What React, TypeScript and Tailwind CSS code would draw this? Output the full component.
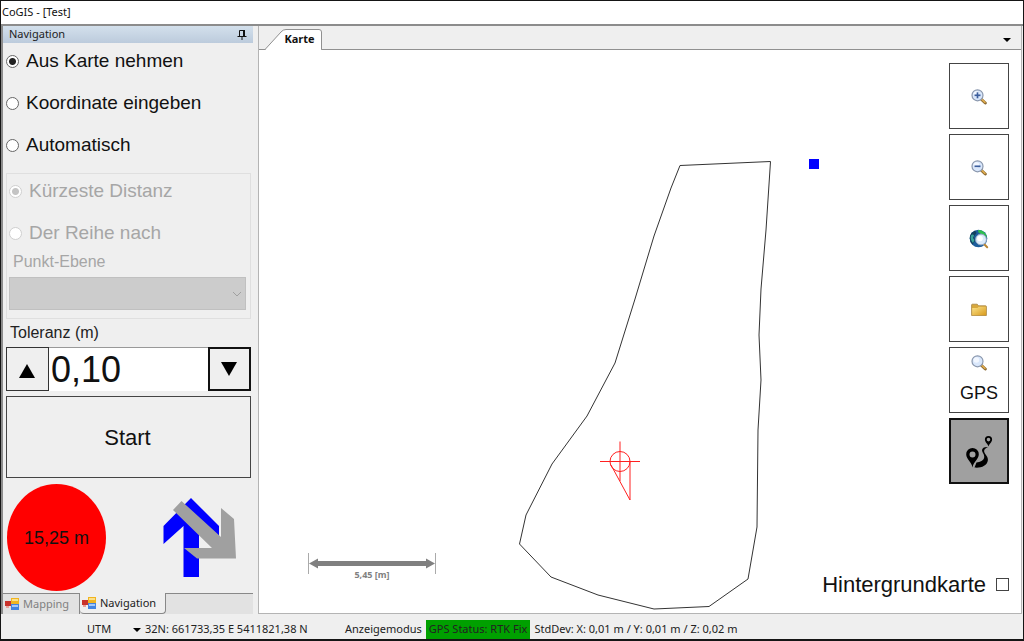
import { useState } from 'react';
import type { ReactNode } from 'react';

const modes = ['Aus Karte nehmen', 'Koordinate eingeben', 'Automatisch'];
const orders = ['Kürzeste Distanz', 'Der Reihe nach'];

const radioClass =
  'appearance-none shrink-0 w-[13px] h-[13px] rounded-full border border-[#666] bg-white checked:bg-[radial-gradient(#222_0_3px,#fff_4px)] disabled:border-[#cfcfcf] disabled:checked:bg-[radial-gradient(#c4c4c4_0_3px,#fff_4px)]';

function Lens({ sign }: { sign?: 'plus' | 'minus' }) {
  return (
    <svg className="w-4 h-4" viewBox="0 0 16 16" fill="none">
      <path d="M10 10 L14.3 14" stroke="#8a6a35" strokeWidth="3" strokeLinecap="round" />
      <path d="M10.4 10 L14 13.3" stroke="#e0ac4c" strokeWidth="1.6" strokeLinecap="round" />
      <circle cx="6.5" cy="6.3" r="5.5" fill="#d9e7fb" stroke="#8a97ad" strokeWidth="1.2" />
      <circle cx="5.4" cy="5" r="2.8" fill="#f2f7ff" />
      {sign && <path d="M3.5 6.3h6" stroke="#3c5f9e" strokeWidth="1.7" />}
      {sign === 'plus' && <path d="M6.5 3.3v6" stroke="#3c5f9e" strokeWidth="1.7" />}
    </svg>
  );
}

function GlobeLens() {
  return (
    <svg className="w-5 h-5" viewBox="0 0 20 20" fill="none">
      <circle cx="9.5" cy="9.5" r="8.8" fill="#1c5d9c" />
      <path d="M1 7 A9 9 0 0 1 6 1.5 L7.5 4 L5 7.5 L6 12 L3.5 15.5 A9 9 0 0 1 1 7Z" fill="#12415f" />
      <path d="M2 6.5 C3 5 4.5 5 5 6.5 L4 9 L5.5 11 L4 14 C2 12 1 9 2 6.5Z" fill="#39a59a" />
      <path d="M9 1 C13 .6 17.5 4 18 8.5 L15 6 L12 5 L9.5 3.5Z" fill="#2fc04c" />
      <path d="M14 14 L18.2 18.2" stroke="#b98534" strokeWidth="2" strokeLinecap="round" />
      <circle cx="12" cy="10.5" r="5.4" fill="#dcebfb" stroke="#93a7c0" />
      <circle cx="11" cy="9.5" r="2.8" fill="#fff" />
    </svg>
  );
}

function Folder() {
  return (
    <svg className="w-4 h-4" viewBox="0 0 16 16">
      <defs>
        <linearGradient id="folder" x1="0" y1="0" x2="1" y2="1">
          <stop offset="0" stopColor="#fbe48c" />
          <stop offset="1" stopColor="#d99a1c" />
        </linearGradient>
      </defs>
      <path d="M.6 13.5V3q0-.8.8-.8h4.8l1.4 1.6h7q.8 0 .8.8v8.9z" fill="#d8a83c" stroke="#a78441" strokeWidth=".8" />
      <path d="M1.2 13.2V6h5.3l1.3-1.3h7.1v8.5z" fill="url(#folder)" />
    </svg>
  );
}

function Route() {
  return (
    <svg className="w-7 h-8" viewBox="0 0 28 32">
      <path
        d="M7.5 12a6.3 6.3 0 0 0-6.3 6.3c0 5 5.2 7.2 6.3 13.2 1.1-6 6.3-8.2 6.3-13.2A6.3 6.3 0 0 0 7.5 12zm0 3.4a3 3 0 1 1 0 6 3 3 0 0 1 0-6z"
        fillRule="evenodd"
      />
      <path
        d="M23.5 0a3.6 3.6 0 0 0-3.6 3.6c0 2.8 2.8 4 3.6 7 .8-3 3.6-4.2 3.6-7A3.6 3.6 0 0 0 23.500 0zm0 1.800a1.800 1.800 0 1 1 0 3.600 1.800 1.800 0 0 1 0-3.600z"
        fillRule="evenodd"
      />
      <path d="M23 11c-3-.4-6 .7-6 3.300 0 2.400 2.600 4 2.200 7-.4 3.300-4.200 4.800-7.700 5.200l-2 5c5.500.8 13-1.400 13.400-7.500.2-4-3.800-6.300-3.800-9 0-1.900 1.900-3 3.900-4z" />
    </svg>
  );
}

function FormIcon() {
  return (
    <svg className="w-[14px] h-[14px] shrink-0" viewBox="0 0 14 14">
      <rect x="0" y="4" width="6" height="5" fill="#c8322b" />
      <rect x="1" y="9" width="3" height="2" fill="#e8a09a" />
      <rect x="6" y="1" width="8" height="6" fill="#f0b420" />
      <rect x="7" y="2" width="6" height="2" fill="#fbe08a" />
      <rect x="6" y="7" width="8" height="6" fill="#4384e0" />
      <rect x="7" y="8" width="6" height="2" fill="#a4c8f8" />
    </svg>
  );
}

function Arrows() {
  return (
    <svg className="w-[74px] h-[80px]" viewBox="164 497 74 80">
      <path d="M192 497 L220 525 V543 L200 524 V576 H184.500 V525 L164.500 543 V525Z" fill="#0000ff" />
      <path d="M182.500 500 L222 536 V507 L235 518 L237 557.500 H198 L185 547 H213 L174 509Z" fill="#a0a0a0" />
    </svg>
  );
}

function ToolButton({ label, active, children }: { label: string; active?: boolean; children: ReactNode }) {
  return (
    <button
      type="button"
      aria-label={label}
      className={`w-[60px] h-[66px] pt-0.5 flex flex-col items-center justify-center ${
        active ? 'bg-[#a0a0a0] border-2 border-[#111]' : 'bg-white border border-[#444]'
      }`}
    >
      {children}
    </button>
  );
}

function Sidebar() {
  const [mode, setMode] = useState(modes[0]);
  const [tolerance, setTolerance] = useState(0.1);

  return (
    <aside className="w-[255px] shrink-0 flex flex-col font-['Liberation_Sans',sans-serif]">
      <div className="h-[17px] flex items-center justify-between mr-[5px] px-1.5 bg-linear-to-b from-[#d3e0ec] to-[#bccbdc] font-['Noto_Sans',sans-serif] text-[#222]">
        <h2>Navigation</h2>
        <button type="button" aria-label="Fixieren">
          <svg className="w-2.5 h-3" viewBox="0 0 10 12" fill="none" stroke="#111">
            <path d="M2.500 7V1.500H6.500V7M.5 7.500H9.500M5 8v3" />
            <path d="M7 1v6" strokeWidth="2" />
          </svg>
        </button>
      </div>

      <div className="flex flex-col pl-[3px] pr-[7px]">
        <div className="flex flex-col gap-1.5 text-[19px]">
          {modes.map((m) => (
            <label key={m} className="h-9 flex items-center gap-[7px]">
              <input
                type="radio"
                name="mode"
                checked={mode === m}
                onChange={() => setMode(m)}
                className={radioClass}
              />
              {m}
            </label>
          ))}
        </div>

        <fieldset disabled className="mt-2.5 border border-[#dfdfdf] px-0.5 pb-2 text-[#a6a6a6]">
          <div className="flex flex-col gap-2 text-[19px]">
            {orders.map((o, i) => (
              <label key={o} className="h-[34px] flex items-center gap-[7px]">
                <input type="radio" name="order" defaultChecked={i === 0} className={radioClass} />
                {o}
              </label>
            ))}
          </div>
          <label htmlFor="layer" className="block pl-1 text-base">
            Punkt-Ebene
          </label>
          <div className="relative mt-[3px] mr-0.5">
            <select id="layer" className="block w-full h-[33px] appearance-none bg-[#cccccc] border border-[#c0c0c0]" />
            <svg className="absolute right-1 top-3 w-2.5 h-2.5" viewBox="0 0 10 10" fill="none" stroke="#a0a0a0">
              <path d="M1 3l4 4 4-4" />
            </svg>
          </div>
        </fieldset>

        <label htmlFor="tolerance" className="h-7 flex items-center pl-1 text-base text-[#222]">
          Toleranz (m)
        </label>
        <div className="h-11 flex">
          <button
            type="button"
            aria-label="Toleranz erhöhen"
            onClick={() => setTolerance(tolerance + 0.01)}
            className="w-[43px] pt-1 pr-0.5 shrink-0 flex items-center justify-center border border-[#333]"
          >
            <svg className="w-4 h-4" viewBox="0 0 16 16">
              <path d="M8 1l8 14H0z" />
            </svg>
          </button>
          <input
            id="tolerance"
            readOnly
            value={tolerance.toFixed(2).replace('.', ',')}
            className="flex-1 min-w-0 bg-white border-t border-[#999] pl-0.5 text-4xl"
          />
          <button
            type="button"
            aria-label="Toleranz verringern"
            onClick={() => setTolerance(Math.max(0, tolerance - 0.01))}
            className="w-[43px] pr-0.5 shrink-0 flex items-center justify-center border-2 border-[#111]"
          >
            <svg className="w-4 h-4" viewBox="0 0 16 16">
              <path d="M0 1h16L8 15z" />
            </svg>
          </button>
        </div>

        <button type="button" className="mt-[5px] h-[82px] pr-0.5 border border-[#444] text-[22px]">
          Start
        </button>

        <div className="mt-1.5 flex items-center justify-between pl-px pr-3.5">
          <div className="w-[99px] h-[107px] rounded-[50%] bg-[#ff0000] flex items-center justify-center text-lg">
            15,25 m
          </div>
          <Arrows />
        </div>
      </div>

      <div
        role="tablist"
        className="mt-auto mr-[5px] h-[21px] flex bg-[#e2e2e2] font-['Noto_Sans',sans-serif]"
      >
        <button
          type="button"
          role="tab"
          className="w-[77px] flex items-center gap-1 pl-0.5 border-t border-r border-[#888] text-[#808080]"
        >
          <FormIcon />
          Mapping
        </button>
        <button
          type="button"
          role="tab"
          aria-selected="true"
          className="w-[86px] flex items-center gap-1 pl-0.5 border-r border-b border-[#888] rounded-b-sm bg-[#efefef] text-[#222]"
        >
          <FormIcon />
          Navigation
        </button>
        <div className="flex-1 border-t border-[#888]" />
      </div>
    </aside>
  );
}

function MapView() {
  return (
    <main className="flex-1 min-w-0 flex flex-col border-x border-b border-[#b4b4b4]">
      <div className="h-6 shrink-0 flex items-end justify-between border-b border-[#909090]">
        <button
          type="button"
          className="relative -mb-px w-[63px] h-[21px] pl-[18px] font-['Open_Sans',sans-serif] font-bold text-[#111]"
        >
          <svg className="absolute inset-0 w-full h-full" viewBox="0 0 63 21" fill="#fff" stroke="#909090">
            <path d="M0 20.500H6L22 3Q24 .5 27 .5H60Q62.500 .5 62.500 3V20.500" />
            <path d="M7 20.500H62" stroke="#fff" />
          </svg>
          <span className="relative">Karte</span>
        </button>
        <button type="button" aria-label="Fenster" className="self-center mr-2.5 mt-1">
          <svg className="w-2 h-1" viewBox="0 0 8 4">
            <path d="M0 0h8L4 4z" />
          </svg>
        </button>
      </div>

      <div className="relative flex-1 flex flex-col items-end justify-between bg-white pt-[13px] pr-3 pb-3">
        <svg className="absolute inset-0 w-full h-full" viewBox="259 50 762 563" fill="none">
          <path
            d="M680 165.500 L770.500 161.500 L766 230 L761 289 L759 335 L761 380 L758 430 L757 527 L748 579 L709 606.500 L654 609 L598 595 L551 577 L519.500 544 L526 515 L552 464 L587 416 L615 363 L635 299 L654 236 L671 188Z"
            stroke="#333"
          />
          <rect x="809" y="159" width="10" height="10" fill="#0000ff" />
          <g stroke="#ff2020">
            <circle cx="620" cy="461.500" r="10" />
            <path d="M600 461.500H640M620 441.500V481M611 465L630 500V462" />
          </g>
          <g stroke="#808080">
            <path d="M308.500 553v21M435.500 553v21" stroke="#aaa" />
            <path d="M314 563.500H430" strokeWidth="5" />
            <path d="M309 563.500l9-5v10zM435 563.500l-9-5v10z" fill="#808080" stroke="none" />
          </g>
          <text x="372" y="578" textAnchor="middle" className="text-[9px] font-bold" fill="#808080">
            5,45 [m]
          </text>
        </svg>

        <div className="relative flex flex-col gap-[5px]">
          <ToolButton label="Vergrößern">
            <Lens sign="plus" />
          </ToolButton>
          <ToolButton label="Verkleinern">
            <Lens sign="minus" />
          </ToolButton>
          <ToolButton label="Gesamtansicht">
            <GlobeLens />
          </ToolButton>
          <ToolButton label="Öffnen">
            <Folder />
          </ToolButton>
          <ToolButton label="GPS">
            <Lens />
            <span className="mt-2 font-['Liberation_Sans',sans-serif] text-lg">GPS</span>
          </ToolButton>
          <ToolButton label="Navigation" active>
            <Route />
          </ToolButton>
        </div>

        <label className="relative flex items-center gap-2.5 font-['Liberation_Sans',sans-serif] text-[22px]">
          Hintergrundkarte
          <input type="checkbox" className="appearance-none w-[13px] h-[13px] bg-white border border-[#444] checked:bg-[#444]" />
        </label>
      </div>
    </main>
  );
}

export default function App() {
  return (
    <div className="min-h-screen flex flex-col bg-[#efefef] border border-b-2 border-[#151515] font-['Noto_Sans',sans-serif] text-[11px] text-[#111]">
      <header className="h-[23px] shrink-0 flex items-center bg-white px-px">
        <h1>CoGIS - [Test]</h1>
      </header>

      <div className="flex-1 flex border-t-2 border-l-2 border-[#8c8c8c] pr-px">
        <Sidebar />
        <MapView />
      </div>

      <footer className="h-[25px] shrink-0 flex items-end text-[#222] whitespace-nowrap">
        <span className="w-[132px] h-[19px] flex items-center pl-[86px]">UTM</span>
        <span className="w-[212px] h-[19px] flex items-center gap-1">
          <svg className="w-2 h-1" viewBox="0 0 8 4">
            <path d="M0 0h8L4 4z" />
          </svg>
          32N: 661733,35 E 5411821,38 N
        </span>
        <span className="h-[19px] flex items-center">Anzeigemodus</span>
        <span className="h-[19px] flex items-center ml-1 px-[3px] bg-[#00a000]">GPS Status: RTK Fix</span>
        <span className="h-[19px] flex items-center ml-1">StdDev: X: 0,01 m / Y: 0,01 m / Z: 0,02 m</span>
      </footer>
    </div>
  );
}
